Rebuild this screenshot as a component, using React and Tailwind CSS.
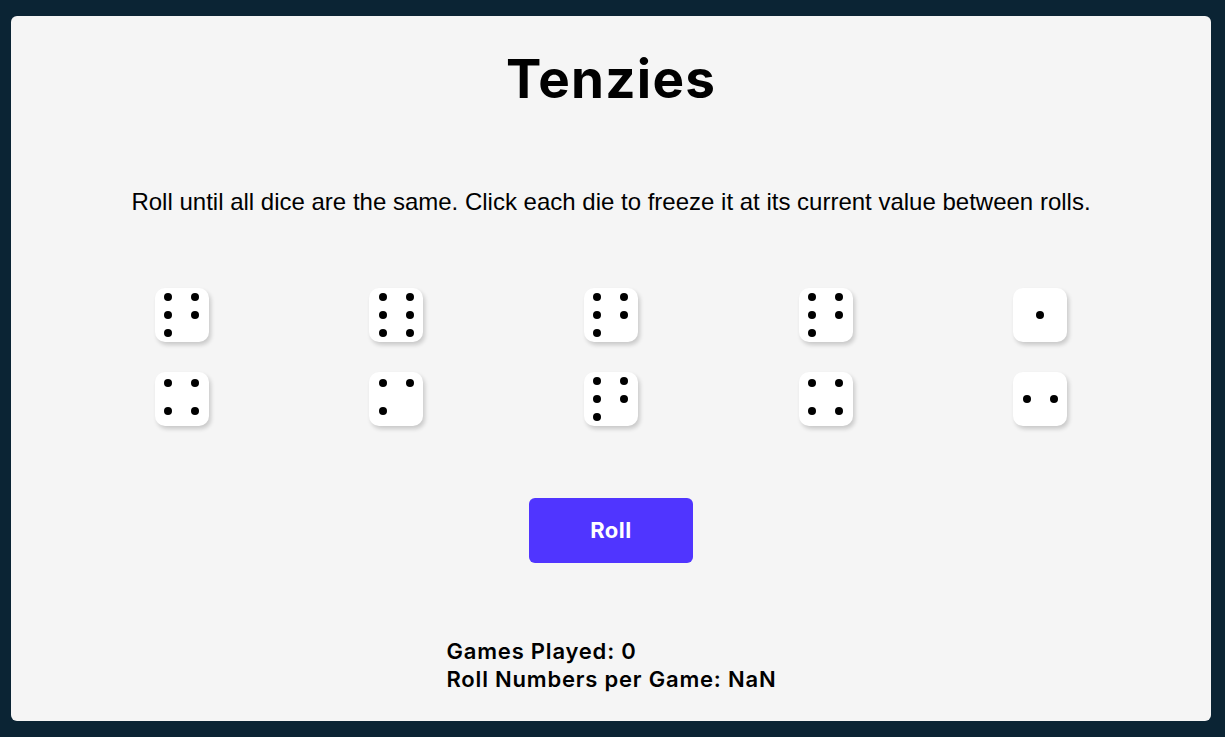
import React from "react";

const dice = [5, 6, 5, 5, 1, 4, 3, 5, 4, 2];

function Dot() {
  return <span className="block w-2 h-2 rounded-full bg-black" />;
}

function Face({ value }) {
  if (value === 1) return <Dot />;
  if (value === 2)
    return (
      <div className="flex gap-[19px]">
        <Dot />
        <Dot />
      </div>
    );
  if (value === 3 || value === 4)
    return (
      <div className="grid grid-cols-2 gap-x-[19px] gap-y-[20px] mb-[4px]">
        <Dot />
        <Dot />
        <Dot />
        {value === 4 ? <Dot /> : <span />}
      </div>
    );
  return (
    <div className="grid grid-cols-2 gap-x-[19px] gap-y-[10px]">
      <Dot />
      <Dot />
      <Dot />
      <Dot />
      <Dot />
      {value === 6 ? <Dot /> : <span />}
    </div>
  );
}

export default function App() {
  return (
    <div className="min-h-[737px] w-full bg-[#0b2434] pl-[11px] pt-[16px] pb-[16px]">
      <main
        className="w-[1200px] h-[705px] bg-[#f5f5f5] rounded-[6px] flex flex-col items-center"
        style={{ fontFamily: "Inter, 'Noto Sans', sans-serif" }}
      >
        <h1 className="mt-[31px] text-[53px] leading-[64px] font-bold tracking-[1.2px] text-black">
          Tenzies
        </h1>
        <p
          className="mt-[77px] text-[24px] leading-[28px] text-black"
          style={{ fontFamily: "'Liberation Sans', Arial, sans-serif" }}
        >
          Roll until all dice are the same. Click each die to freeze it at its current value between rolls.
        </p>
        <div className="mt-[72px] w-[1073px] grid grid-cols-5 gap-y-[30px] justify-items-center">
          {dice.map((v, i) => (
            <div
              key={i}
              className="w-[54px] h-[54px] bg-white rounded-[10px] shadow-[2px_3px_4px_rgba(0,0,0,0.18)] flex items-center justify-center"
            >
              <Face value={v} />
            </div>
          ))}
        </div>
        <button className="mt-[72px] w-[164px] h-[65px] bg-[#5035ff] rounded-[6px] text-white text-[22px] font-bold tracking-[0.5px]">
          Roll
        </button>
        <div className="mt-[74px] w-[330px] ml-[1px] text-[22px] leading-[28px] font-semibold text-black tracking-[0.8px]">
          <div>Games Played: 0</div>
          <div>Roll Numbers per Game: NaN</div>
        </div>
      </main>
    </div>
  );
}
